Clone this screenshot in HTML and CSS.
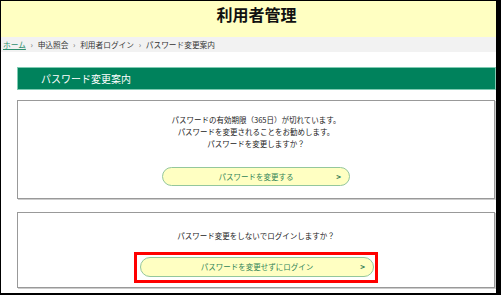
FILE: index.html
```html
<!DOCTYPE html>
<html lang="ja">
<head>
  <meta charset="UTF-8">
  <title>利用者管理</title>
  <link rel="stylesheet" href="styles.css">
</head>
<body>
  <div class="frame">
    <header class="site-head">
      <h1>利用者管理</h1>
    </header>
    <nav class="crumbs">
      <a href="#">ホーム</a>
      <span class="sep">&rsaquo;</span> 申込照会
      <span class="sep">&rsaquo;</span> 利用者ログイン
      <span class="sep">&rsaquo;</span> パスワード変更案内
    </nav>
    <main class="content">
      <h2 class="bar">パスワード変更案内</h2>
      <section class="box box-first">
        <p>パスワードの有効期限（365日）が切れています。<br>パスワードを変更されることをお勧めします。<br>パスワードを変更しますか？</p>
        <a class="pill pill-change" href="#">パスワードを変更する<span class="arrow">&gt;</span></a>
      </section>
      <section class="box box-second">
        <p>パスワード変更をしないでログインしますか？</p>
        <div class="pill-wrap">
          <a class="pill pill-skip" href="#">パスワードを変更せずにログイン<span class="arrow">&gt;</span></a>
          <span class="mark"></span>
        </div>
      </section>
    </main>
  </div>
</body>
</html>
```

FILE: styles.css
```css
/* 利用者管理 */
body {
  margin: 0;
  padding: 0;
  font-family: "Noto Sans CJK JP", "Noto Sans", sans-serif;
  color: #222;
  background-color: #fff;
}

.frame {
  width: 495px;
  height: 292px;
  border-top: 1px solid #000;
  border-left: 1px solid #000;
  border-right: 5px solid #000;
  border-bottom: 2px solid #000;
  overflow: hidden;
}

.site-head {
  background-color: #ffffc2;
  height: 36px;
  padding-left: 16px;
}

.site-head h1 {
  margin: 0;
  font-size: 16px;
  line-height: 26px;
  font-weight: bold;
  color: #111;
  text-align: center;
}

.crumbs {
  background-color: #f2f2f2;
  height: 15px;
  padding-left: 2px;
  font-size: 7.7px;
  line-height: 15px;
  color: #333;
}

.crumbs a {
  color: #2f8f6f;
}

.crumbs .sep {
  color: #777;
  margin: 0 3px;
}

.content {
  padding: 15px 0 0 16px;
}

.bar {
  margin: 0;
  height: 23px;
  padding-left: 24px;
  background-color: #00825c;
  box-shadow: inset 0 0 0 1px #7fcbb2;
  color: #fff;
  font-size: 10px;
  font-weight: normal;
  line-height: 23px;
}

.box {
  width: 476px;
  border: 1px solid #999;
  box-shadow: 1px 1px 0 #ccc;
  text-align: center;
  font-size: 7.5px;
}

.box p {
  margin: 0;
  line-height: 12px;
  color: #222;
}

.box-first {
  margin-top: 10px;
  padding: 13px 0 12px;
}

.box-second {
  margin-top: 13px;
  padding: 17px 0 10px;
}

.pill {
  position: relative;
  display: block;
  margin: 0 auto;
  background-color: #ffffc2;
  border: 1px solid #94c79c;
  border-radius: 10px;
  color: #2f8456;
  text-decoration: none;
  box-sizing: border-box;
}

.pill .arrow {
  position: absolute;
  right: 8px;
  top: 0;
  font-weight: bold;
  font-size: 8px;
  color: #2f7d55;
}

.pill-change {
  margin-top: 17px;
  width: 188px;
  height: 19px;
  line-height: 17px;
}

.pill-wrap {
  position: relative;
  width: 234px;
  margin: 15px auto 0;
  left: 1px;
}

.pill-skip {
  width: 234px;
  height: 20px;
  line-height: 18px;
}

.mark {
  position: absolute;
  left: -6px;
  top: -5px;
  right: -4px;
  bottom: -6px;
  border: 3px solid #f00;
}
```
